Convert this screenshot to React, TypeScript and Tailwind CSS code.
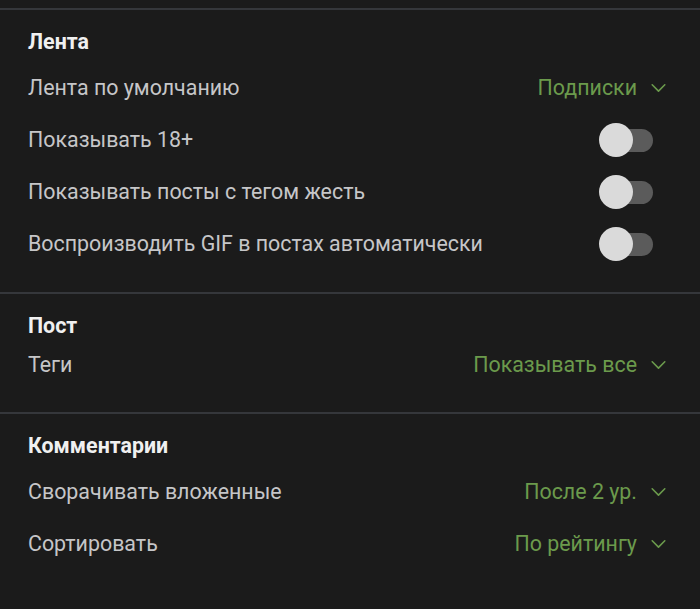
import React from 'react';

type Row =
  | { label: string; kind: 'select'; value: string }
  | { label: string; kind: 'toggle' };

const sections: { title: string; rows: Row[]; head: string; pb: string }[] = [
  {
    title: 'Лента',
    head: 'mb-[6px]',
    pb: 'pb-[22px]',
    rows: [
      { label: 'Лента по умолчанию', kind: 'select', value: 'Подписки' },
      { label: 'Показывать 18+', kind: 'toggle' },
      { label: 'Показывать посты с тегом жесть', kind: 'toggle' },
      { label: 'Воспроизводить GIF в постах автоматически', kind: 'toggle' },
    ],
  },
  {
    title: 'Пост',
    head: 'mb-[-1px]',
    pb: 'pb-[21px]',
    rows: [{ label: 'Теги', kind: 'select', value: 'Показывать все' }],
  },
  {
    title: 'Комментарии',
    head: 'mb-[6px]',
    pb: 'pb-0',
    rows: [
      { label: 'Сворачивать вложенные', kind: 'select', value: 'После 2 ур.' },
      { label: 'Сортировать', kind: 'select', value: 'По рейтингу' },
    ],
  },
];

function Chevron() {
  return (
    <svg width="15" height="15" viewBox="0 0 15 15" fill="none" className="ml-[14px]">
      <path d="M1.2 4.8l6.3 6.3 6.3-6.3" stroke="#6b9a4c" strokeWidth="1.6" strokeLinecap="round" strokeLinejoin="round" />
    </svg>
  );
}

function Toggle() {
  return (
    <div className="relative w-[54px] h-[34px] mr-[19px] flex items-center">
      <div className="ml-[4px] w-[50px] h-[23px] rounded-full bg-[#5b5b5b]" />
      <div className="absolute left-0 top-0 w-[34px] h-[34px] rounded-full bg-[#dadada]" />
    </div>
  );
}

export default function App() {
  return (
    <main
      className="w-[700px] h-[609px] overflow-hidden bg-[#1b1b1b] pt-[8px]"
      style={{ fontFamily: 'Roboto, "Noto Sans", sans-serif' }}
    >
      {sections.map((s) => (
        <section
          key={s.title}
          className={`border-t-2 border-[#35373b] pt-[18px] px-[28px] ${s.pb}`}
        >
          {/* Section title */}
          <h2 className={`text-[21.4px] leading-[28px] font-bold text-[#f0f0f0] ${s.head}`}>
            {s.title}
          </h2>

          {s.rows.map((r) => (
            <div key={r.label} className="h-[52px] flex items-center justify-between">
              <span className="text-[21.4px] text-[#c6c6c8]">{r.label}</span>
              {r.kind === 'select' ? (
                <span className="flex items-center mr-[6px] text-[21.4px] text-[#6b9a4c]">
                  {r.value}
                  <Chevron />
                </span>
              ) : (
                <Toggle />
              )}
            </div>
          ))}
        </section>
      ))}
    </main>
  );
}
